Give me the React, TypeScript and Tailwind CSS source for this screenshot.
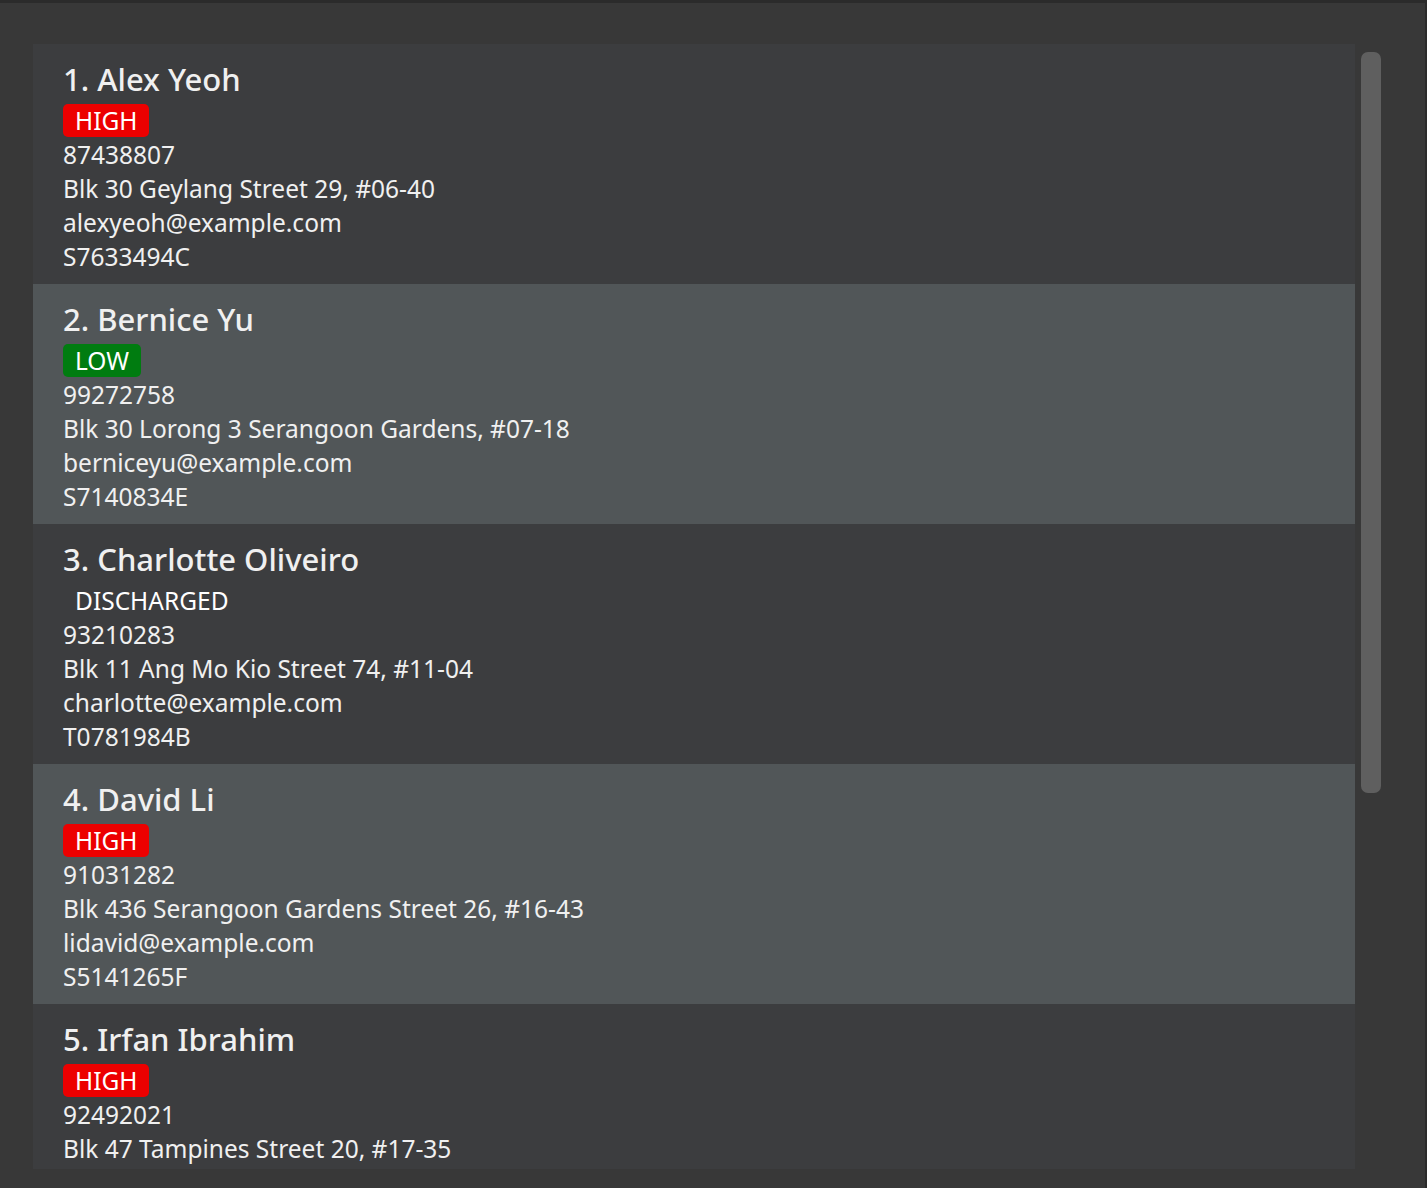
import React from "react";

type P = { name: string; tag: "HIGH" | "LOW" | "DISCHARGED"; phone: string; addr: string; email: string; nric: string };

const people: P[] = [
  { name: "Alex Yeoh", tag: "HIGH", phone: "87438807", addr: "Blk 30 Geylang Street 29, #06-40", email: "alexyeoh@example.com", nric: "S7633494C" },
  { name: "Bernice Yu", tag: "LOW", phone: "99272758", addr: "Blk 30 Lorong 3 Serangoon Gardens, #07-18", email: "berniceyu@example.com", nric: "S7140834E" },
  { name: "Charlotte Oliveiro", tag: "DISCHARGED", phone: "93210283", addr: "Blk 11 Ang Mo Kio Street 74, #11-04", email: "charlotte@example.com", nric: "T0781984B" },
  { name: "David Li", tag: "HIGH", phone: "91031282", addr: "Blk 436 Serangoon Gardens Street 26, #16-43", email: "lidavid@example.com", nric: "S5141265F" },
  { name: "Irfan Ibrahim", tag: "HIGH", phone: "92492021", addr: "Blk 47 Tampines Street 20, #17-35", email: "irfan@example.com", nric: "S1234567A" },
];

function Badge({ tag }: { tag: P["tag"] }) {
  if (tag === "HIGH")
    return <span className="inline-flex h-[33px] items-center rounded-[5px] bg-[#ec0000] px-[12px] text-white">HIGH</span>;
  if (tag === "LOW")
    return <span className="inline-flex h-[33px] items-center rounded-[5px] bg-[#007c10] px-[12px] text-white">LOW</span>;
  return <span className="inline-flex h-[33px] items-center px-[12px] text-white">DISCHARGED</span>;
}

export default function App() {
  return (
    <div
      className="h-[1188px] w-[1427px] overflow-hidden border-t-[3px] border-r-[2px] border-[#2b2b2b] bg-[#383838]"
      style={{ fontFamily: '"Noto Sans", "Open Sans", sans-serif' }}
    >
      <div className="flex pl-[33px] pt-[41px]">
        <div className="h-[1125px] w-[1322px] overflow-hidden">
          {people.map((p, i) => (
            <div
              key={p.name}
              className={`h-[240px] overflow-hidden pl-[30px] pt-[14px] ${i % 2 === 0 ? "bg-[#3c3d3f]" : "bg-[#515658]"}`}
            >
              <div className="h-[42px] text-[31px] font-medium leading-[42px] text-[#f0f0f0]">
                {i + 1}. {p.name}
              </div>
              <div className="mt-[4px] text-[24.5px] leading-[33px]">
                <Badge tag={p.tag} />
              </div>
              <div className="mt-[1px] text-[24.5px] leading-[34px] text-[#f0f0f0]">
                <div>{p.phone}</div>
                <div>{p.addr}</div>
                <div>{p.email}</div>
                <div>{p.nric}</div>
              </div>
            </div>
          ))}
        </div>
        <div className="ml-[6px] mt-[8px] h-[741px] w-[20px] rounded-[7px] bg-[#5f5f5f]" />
      </div>
    </div>
  );
}
